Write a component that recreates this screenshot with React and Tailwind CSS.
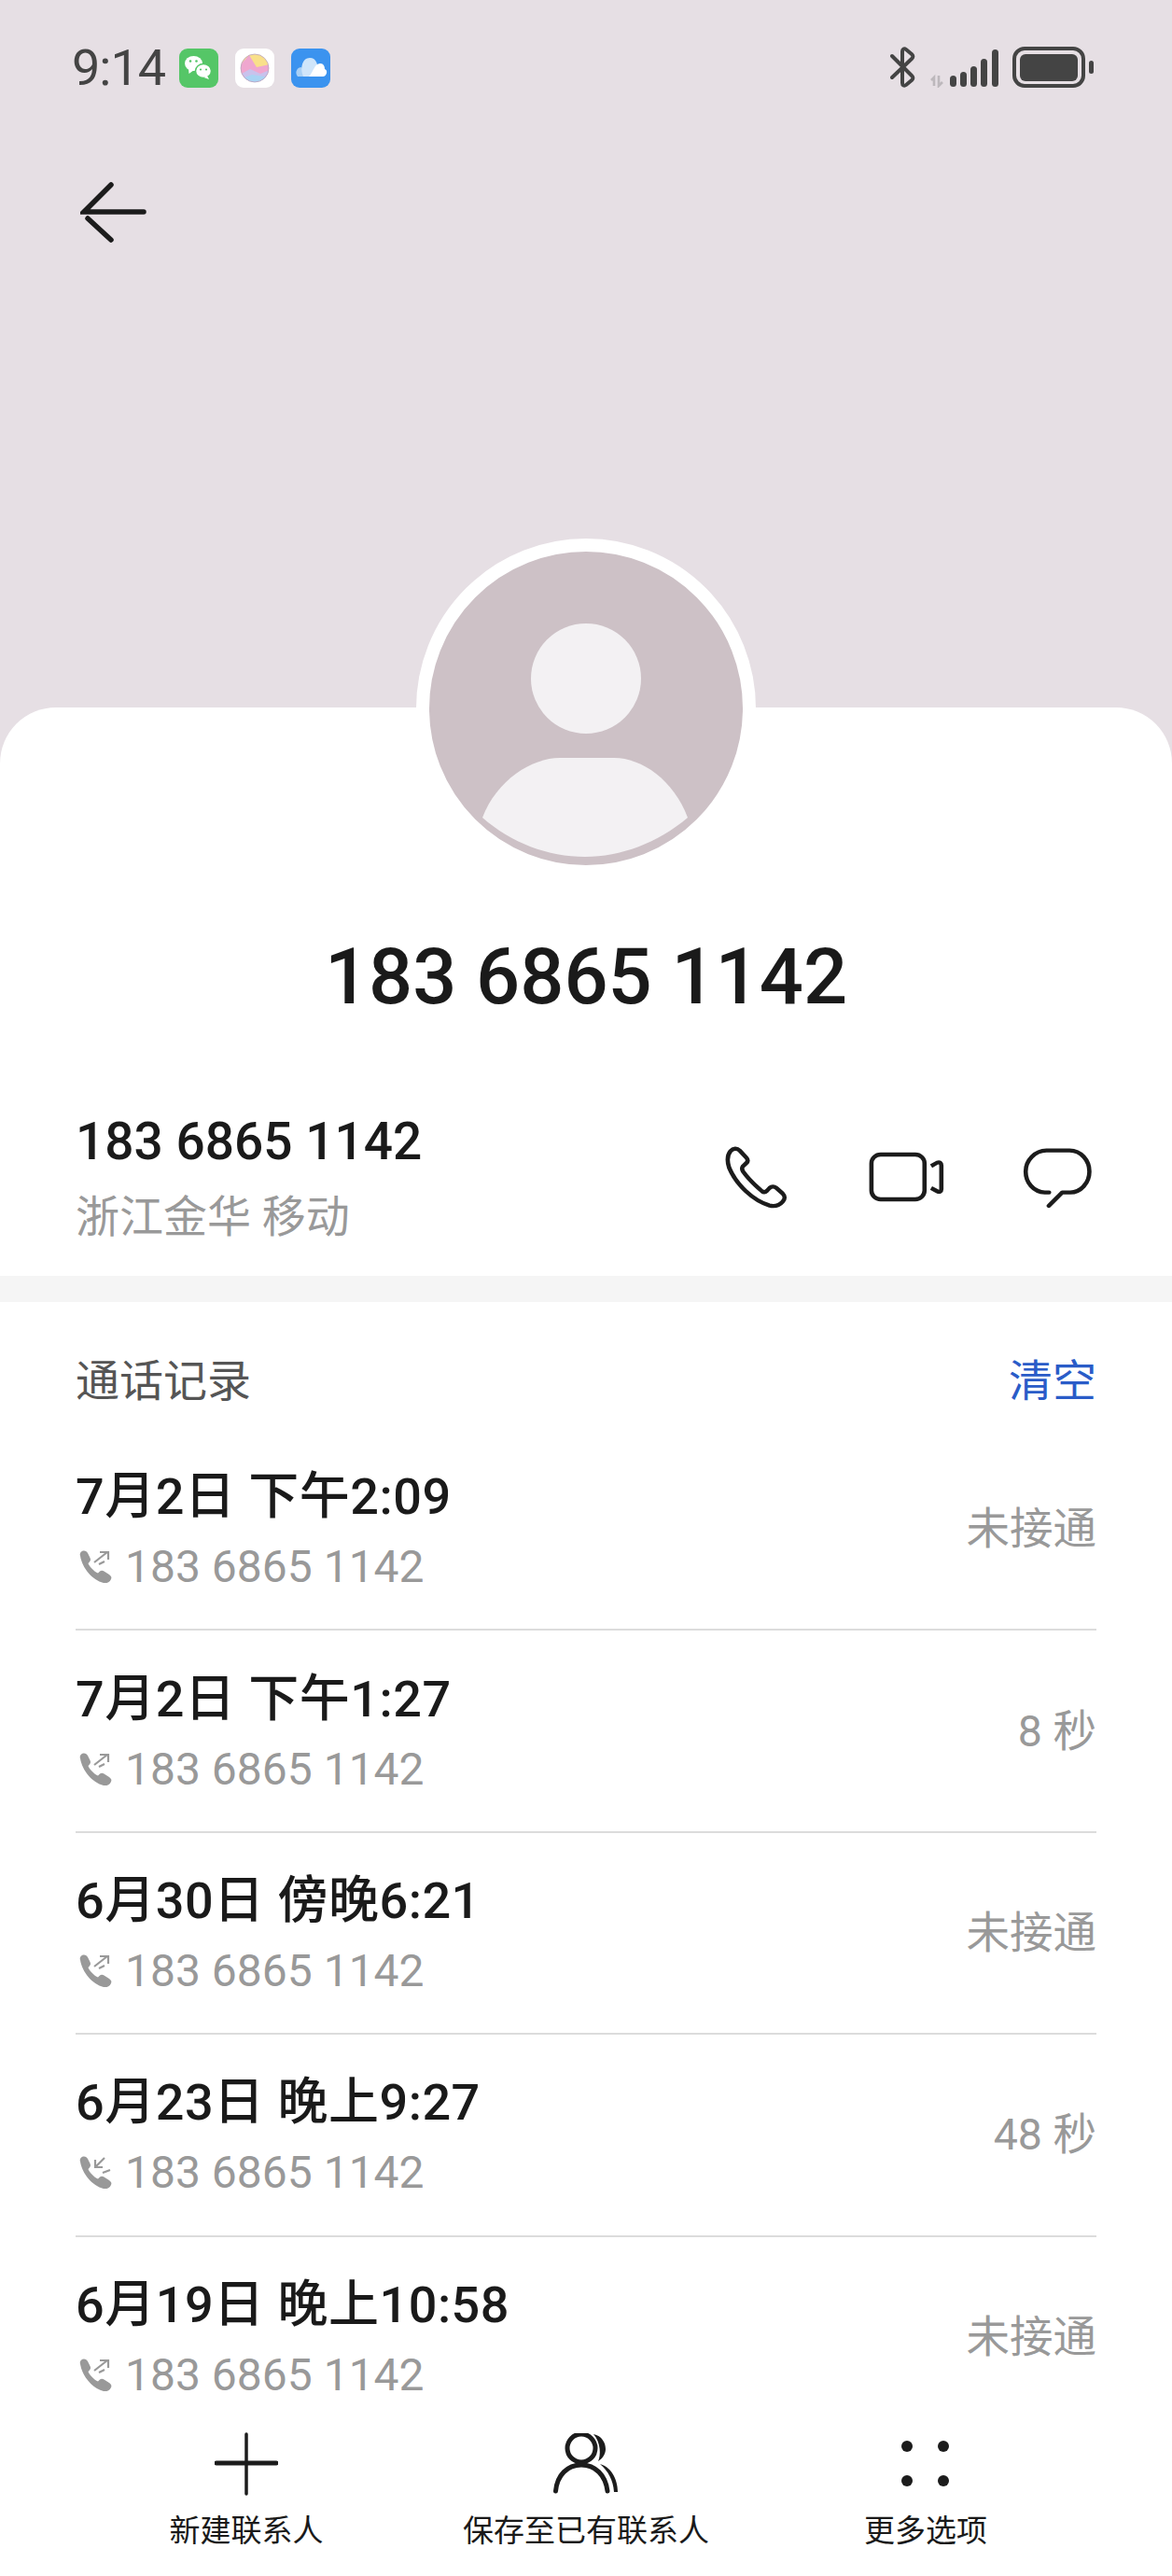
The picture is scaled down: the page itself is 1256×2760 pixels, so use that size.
const FONT = "font-['Roboto','Noto_Sans_CJK_SC',sans-serif]";

function WeChat() {
  return (
    <svg width="42" height="42" viewBox="0 0 42 42" className="block">
      <rect width="42" height="42" rx="9" fill="#55c667" />
      <ellipse cx="15.500" cy="16" rx="9.500" ry="8" fill="#fff" />
      <path d="M10 21 L10.500 27 L16 23 Z" fill="#fff" />
      <ellipse cx="26" cy="24" rx="8.500" ry="7.500" fill="#fff" stroke="#55c667" strokeWidth="1.500" />
      <path d="M30 29 L32 33 L26.500 31 Z" fill="#fff" />
      <circle cx="12" cy="13.500" r="1.300" fill="#55c667" />
      <circle cx="18.500" cy="13.500" r="1.300" fill="#55c667" />
      <circle cx="23" cy="22.500" r="1.100" fill="#55c667" />
      <circle cx="29" cy="22.500" r="1.100" fill="#55c667" />
    </svg>
  );
}

function Gallery() {
  return (
    <svg width="42" height="42" viewBox="0 0 42 42" className="block">
      <defs>
        <clipPath id="egg">
          <circle cx="21" cy="21" r="15" />
        </clipPath>
      </defs>
      <rect width="42" height="42" rx="9" fill="#ffffff" />
      <g clipPath="url(#egg)">
        <rect x="5" y="5" width="32" height="32" fill="#f9e08a" />
        <path d="M5 18 L15 7 L23 20 L37 17 L37 37 L5 37 Z" fill="#efa7cf" />
        <path d="M5 28 L16 22 L27 27 L37 23 L37 37 L5 37 Z" fill="#c9c2ec" />
        <path d="M5 33 L18 28 L37 31 L37 37 L5 37 Z" fill="#a9d3f3" />
      </g>
      <circle cx="21" cy="21" r="15" fill="none" stroke="#b9a3c0" strokeWidth="0.800" />
    </svg>
  );
}

function Cloud() {
  return (
    <svg width="42" height="42" viewBox="0 0 42 42" className="block">
      <rect width="42" height="42" rx="9" fill="#3b93ef" />
      <path d="M7 30 C3 25 7 20 11 20 L17 30 Z" fill="#a9d0f5" />
      <path d="M13 30 C9 21 12 10 20 10 C27 10 30 17 28 30 Z" fill="#cfe5fa" />
      <path d="M19 30 C24 25 25 16 31 16 C36 16 36 21 36 22 C40 23 38 30 34 30 Z" fill="#ffffff" />
    </svg>
  );
}

function Bluetooth() {
  return (
    <svg width="28" height="44" viewBox="0 0 28 44" className="block" fill="none" stroke="#444" strokeWidth="4" strokeLinecap="round" strokeLinejoin="round">
      <path d="M2 10 L23 31 C25 33 25 34 23 36 L17 41 C15 42.500 13 41.500 13 39 L13 5 C13 2.500 15 1.500 17 3 L23 8 C25 10 25 11 23 13 L2 33" />
    </svg>
  );
}

function Signal() {
  const bars = [
    [21, 12],
    [32, 16],
    [43, 22],
    [54, 30],
    [66, 40],
  ];
  return (
    <svg width="73" height="42" viewBox="0 0 73 42" className="block">
      <path d="M4 40 L4 31 L1 34 M9 29 L9 40 L13 36" stroke="#bdb8bc" strokeWidth="2.600" fill="none" />
      {bars.map(([x, h]) => (
        <rect key={x} x={x} y={41 - h} width="7" height={h} rx="3.500" fill="#444" />
      ))}
    </svg>
  );
}

function Battery() {
  return (
    <svg width="88" height="44" viewBox="0 0 88 44" className="block">
      <rect x="2" y="2" width="74" height="40" rx="11" fill="none" stroke="#444" strokeWidth="4" />
      <rect x="8" y="8" width="62" height="29" rx="6" fill="#444" />
      <rect x="82" y="15" width="5" height="14" rx="2.500" fill="#444" />
    </svg>
  );
}

function PhoneIcon() {
  return (
    <svg width="71" height="71" viewBox="210 160 200 212" preserveAspectRatio="none" className="block" fill="none" stroke="#1c1c1c" strokeWidth="13" strokeLinejoin="round">
      <path d="M232 182 C240 172 252 172 260 180 L280 203 C286 210 285 215 280 220 L270 230 C266 235 266 240 270 247 C285 270 305 290 327 310 C333 315 338 313 342 309 L350 300 C356 294 364 294 370 299 L390 318 C397 325 397 335 390 343 C380 355 365 360 350 356 C300 340 250 290 228 235 C222 215 222 195 232 182 Z" />
    </svg>
  );
}

function VideoIcon() {
  return (
    <svg width="82" height="55" viewBox="650 186 232 164" preserveAspectRatio="none" className="block" fill="none" stroke="#1c1c1c" strokeWidth="13" strokeLinecap="round" strokeLinejoin="round">
      <rect x="661" y="195" width="161" height="143" rx="28" />
      <path d="M842 232 L860 221 C868 218 873 222 873 230 L873 305 C873 313 868 316 860 312 L842 302" strokeLinecap="butt" />
    </svg>
  );
}

function ChatIcon() {
  return (
    <svg width="75" height="66" viewBox="1118 172 212 197" preserveAspectRatio="none" className="block" fill="none" stroke="#1c1c1c" strokeWidth="13" strokeLinecap="round" strokeLinejoin="round">
      <path d="M1198 317 L1185 317 C1150 315 1127 285 1127 250 C1127 215 1155 183 1190 183 L1260 183 C1295 183 1320 215 1320 250 C1320 285 1295 317 1262 317 L1238 317 L1197 360" />
    </svg>
  );
}

function CallIcon({ incoming }) {
  return (
    <svg width="36" height="36" viewBox="0 0 36 36" className="block shrink-0" fill="#999">
      <path d="M2 6 C1 3 3 0.500 6 0.500 C8 0.500 9 1.500 10 3 L12.500 8 C13.500 10 13 11.500 11.500 13 L10.500 14 C11.500 17 17 23 21 24.500 L22.500 23 C24 21.500 26 21.500 27.500 22.500 L33 26 C35 27.500 36 29 35 31 C33.500 34.500 30 35.500 27 35 C15 32 4 19 2 6 Z" />
      {incoming ? (
        <g stroke="#999" strokeWidth="2.200" fill="none">
          <path d="M28 2 L18 12 M18 4 L18 12 L26 12 M34 15 L26 18" />
        </g>
      ) : (
        <g stroke="#999" strokeWidth="2.200" fill="none">
          <path d="M17 13 L31 2 M23 2 L32 2 L32 10 M22 15 L28 12" />
        </g>
      )}
    </svg>
  );
}

const rows = [
  { date: "7月2日 下午2:09", right: "未接通" },
  { date: "7月2日 下午1:27", right: "8 秒" },
  { date: "6月30日 傍晚6:21", right: "未接通" },
  { date: "6月23日 晚上9:27", right: "48 秒", incoming: true },
  { date: "6月19日 晚上10:58", right: "未接通", last: true },
];

function CallRow({ date, right, incoming, last }) {
  return (
    <div className={`flex h-[216.4px] items-center justify-between border-b-2 ${last ? "border-transparent" : "border-[#dcdcdc]"}`}>
      <div className="flex flex-col gap-[12px] pt-[4px]">
        <div className="text-[54px] leading-[66px] font-medium tracking-[0.5px] text-[#1a1a1a]">{date}</div>
        <div className="flex items-center gap-[14px] pl-[3px] text-[48px] leading-[60px] text-[#999999]">
          <CallIcon incoming={incoming} />
          <span>183 6865 1142</span>
        </div>
      </div>
      <div className="text-[46.5px] leading-[60px] text-[#999999]">{right}</div>
    </div>
  );
}

function BarItem({ width, icon, label }) {
  return (
    <div className={`flex flex-col items-center ${width}`}>
      <div className="flex h-[72px] items-center justify-center">{icon}</div>
      <div className="mt-[14px] text-[33px] leading-[44px] text-[#1a1a1a]">{label}</div>
    </div>
  );
}

export default function App() {
  return (
    <div className={`relative h-[2760px] w-[1256px] overflow-hidden bg-white ${FONT}`}>
      <div className="h-[820px] bg-[#e6dfe4]">
        <div className="flex items-start justify-between pl-[77px] pr-[83px] pt-[48px]">
          <div className="flex h-[50px] items-center">
            <span className="w-[115px] text-[54px] leading-[50px] tracking-[-1px] text-[#444444]">9:14</span>
            <div className="flex gap-[18px]">
              <WeChat />
              <Gallery />
              <Cloud />
            </div>
          </div>
          <div className="flex items-end gap-[15px] pt-[2px]">
            <Bluetooth />
            <Signal />
            <Battery />
          </div>
        </div>
        <div className="ml-[86px] mt-[96px]">
          <svg width="72" height="66" viewBox="0 0 72 66" className="block" fill="none" stroke="#1c1c1c" strokeWidth="5.500" strokeLinecap="round">
            <path d="M33 4 L4 33 L68 33 M8 40 L33 63" />
          </svg>
        </div>
      </div>

      <div className="relative -mt-[62px] rounded-t-[60px] bg-white">
        <div className="absolute left-[446px] top-[-181px] h-[364px] w-[364px] rounded-full border-[14px] border-white bg-[#cdc1c6]">
          <svg width="336" height="336" viewBox="0 0 336 336" className="block">
            <circle cx="168" cy="136" r="59" fill="#f3f1f3" />
            <path d="M57 285 C72 245 110 221 140 221 L198 221 C228 221 262 245 277 285 C245 312 205 327 167 327 C127 327 88 312 57 285 Z" fill="#f3f1f3" />
          </svg>
        </div>

        <div className="pt-[239px] text-center text-[83px] leading-[100px] font-medium text-[#1a1a1a]">183 6865 1142</div>

        <div className="mt-[91px] flex items-center justify-between pl-[81px] pr-[85px]">
          <div className="flex flex-col gap-[11px]">
            <div className="text-[55px] leading-[70px] font-medium text-[#1a1a1a]">183 6865 1142</div>
            <div className="text-[47px] leading-[70px] text-[#999999]">浙江金华 移动</div>
          </div>
          <div className="-mt-[4px] flex items-center gap-[84px]">
            <PhoneIcon />
            <VideoIcon />
            <ChatIcon />
          </div>
        </div>

        <div className="mt-[28px] h-[28px] bg-[#f5f5f5]" />

        <div className="flex items-center justify-between pl-[81px] pr-[81px] pt-[55px] text-[47px] leading-[60px]">
          <span className="text-[#555555]">通话记录</span>
          <span className="text-[#2a5cc8]">清空</span>
        </div>

        <div className="mx-[81px] mt-[21px]">
          {rows.map((r) => (
            <CallRow key={r.date} {...r} />
          ))}
        </div>
      </div>

      <div className="absolute bottom-0 left-0 flex h-[160px] w-full items-start bg-white pl-[99px] pt-[4px]">
        <BarItem
          width="w-[330px]"
          label="新建联系人"
          icon={
            <svg width="68" height="68" viewBox="0 0 68 68" className="block" fill="none" stroke="#1c1c1c" strokeLinecap="round">
              <path d="M34 2 L34 66" strokeWidth="3.500" />
              <path d="M2 33 L66 33" strokeWidth="5" />
            </svg>
          }
        />
        <BarItem
          width="w-[398px]"
          label="保存至已有联系人"
          icon={
            <svg width="70" height="66" viewBox="0 0 70 66" className="block" fill="none" stroke="#1c1c1c" strokeLinecap="round">
              <circle cx="30" cy="16" r="15" strokeWidth="5" />
              <path d="M2.500 62 C4 45 15 34 30 34 C45 34 56 45 58 62" strokeWidth="5" />
              <path d="M43 1 C52 3 56 10 56 17 C56 22 53 27 48 30 C51 24 51 10 43 1 Z" fill="#1c1c1c" stroke="none" />
              <path d="M50 33 C61 36 69 48 69 63 L65 63 C64 50 59 41 50 33 Z" fill="#1c1c1c" stroke="none" />
            </svg>
          }
        />
        <BarItem
          width="w-[330px]"
          label="更多选项"
          icon={
            <svg width="52" height="50" viewBox="0 0 52 50" className="block" fill="#1c1c1c">
              <circle cx="6" cy="6" r="6" />
              <circle cx="45" cy="6" r="6" />
              <circle cx="6" cy="43" r="6" />
              <circle cx="45" cy="43" r="6" />
            </svg>
          }
        />
      </div>
    </div>
  );
}
